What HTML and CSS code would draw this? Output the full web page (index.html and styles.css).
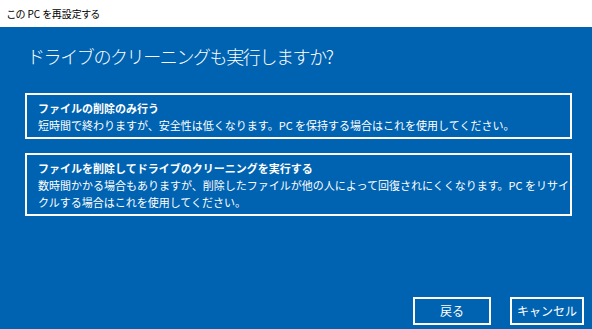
FILE: index.html
```html
<!DOCTYPE html>
<html lang="ja">
<head>
<meta charset="utf-8">
<link rel="stylesheet" href="styles.css">
</head>
<body>
<div class="titlebar">この PC を再設定する</div>
<div class="main">
  <h1 class="heading">ドライブのクリーニングも実行しますか?</h1>
  <div class="option first">
    <div class="opt-title">ファイルの削除のみ行う</div>
    <div class="opt-desc">短時間で終わりますが、安全性は低くなります。PC を保持する場合はこれを使用してください。</div>
  </div>
  <div class="option">
    <div class="opt-title">ファイルを削除してドライブのクリーニングを実行する</div>
    <div class="opt-desc">数時間かかる場合もありますが、削除したファイルが他の人によって回復されにくくなります。PC をリサイ<br>クルする場合はこれを使用してください。</div>
  </div>
  <div class="spacer"></div>
  <div class="buttons">
    <div class="btn back">戻る</div>
    <div class="btn cancel">キャンセル</div>
  </div>
</div>
</body>
</html>
```
FILE: styles.css
```css
html, body {
  margin: 0;
  padding: 0;
  width: 592px;
  height: 329px;
  overflow: hidden;
}
body {
  font-family: "Noto Sans CJK JP", "Noto Sans", sans-serif;
  background: #0063b1;
  color: #fff;
}
.titlebar {
  height: 27px;
  background: #fff;
  color: #000;
  font-size: 10px;
  font-feature-settings: "palt";
  line-height: 27px;
  padding-left: 7px;
  box-sizing: border-box;
}
.main {
  height: 302px;
  box-sizing: border-box;
  padding: 15px 20px 4px 25px;
  display: flex;
  flex-direction: column;
}
.heading {
  margin: 0 0 0 2px;
  font-size: 18px;
  letter-spacing: -1.4px;
  font-weight: 300;
  line-height: 28px;
}
.option {
  border: 2px solid #fff;
  padding: 5px 9px 3px 11px;
  font-size: 11px;
  line-height: 17px;
  margin-top: 14px;
}
.option.first {
  margin-top: 23px;
}
.opt-title {
  font-weight: 700;
}
.opt-desc {
  white-space: nowrap;
}
.spacer {
  flex: 1;
}
.buttons {
  display: flex;
  justify-content: flex-end;
  gap: 19px;
  margin-right: -12px;
}
.btn {
  border: 2px solid #fff;
  height: 28px;
  box-sizing: border-box;
  font-size: 12px;
  line-height: 24px;
  text-align: center;
}
.btn.back { width: 78px; }
.btn.cancel { width: 74px; }
```
